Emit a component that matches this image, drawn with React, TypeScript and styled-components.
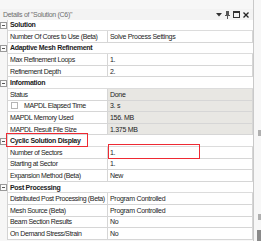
import React, { ReactElement } from "react";
import styled, { createGlobalStyle } from "styled-components";

type Row =
  | { kind: "group"; title: string; highlight?: boolean }
  | {
      kind: "prop";
      label: string;
      value: string;
      readOnly?: boolean;
      checkbox?: boolean;
      highlight?: boolean;
    };

const ROWS: Row[] = [
  { kind: "group", title: "Solution" },
  { kind: "prop", label: "Number Of Cores to Use (Beta)", value: "Solve Process Settings" },
  { kind: "group", title: "Adaptive Mesh Refinement" },
  { kind: "prop", label: "Max Refinement Loops", value: "1." },
  { kind: "prop", label: "Refinement Depth", value: "2." },
  { kind: "group", title: "Information" },
  { kind: "prop", label: "Status", value: "Done", readOnly: true },
  { kind: "prop", label: "MAPDL Elapsed Time", value: "3. s", readOnly: true, checkbox: true },
  { kind: "prop", label: "MAPDL Memory Used", value: "156. MB", readOnly: true },
  { kind: "prop", label: "MAPDL Result File Size", value: "1.375 MB", readOnly: true },
  { kind: "group", title: "Cyclic Solution Display", highlight: true },
  { kind: "prop", label: "Number of Sectors", value: "1.", highlight: true },
  { kind: "prop", label: "Starting at Sector", value: "1." },
  { kind: "prop", label: "Expansion Method (Beta)", value: "New" },
  { kind: "group", title: "Post Processing" },
  { kind: "prop", label: "Distributed Post Processing (Beta)", value: "Program Controlled" },
  { kind: "prop", label: "Mesh Source (Beta)", value: "Program Controlled" },
  { kind: "prop", label: "Beam Section Results", value: "No" },
  { kind: "prop", label: "On Demand Stress/Strain", value: "No" },
];

function App(): ReactElement {
  return (
    <>
      <GlobalStyle />
      <Page>
        <Panel>
          <TitleBar>
            <Title>Details of "Solution (C6)"</Title>
            <Grip />
            <TitleIcons>
              <svg width="6" height="4" viewBox="0 0 6 4">
                <path d="M0 0h6L3 3.5z" fill="#333" />
              </svg>
              <svg width="5" height="8" viewBox="0 0 5 8">
                <path d="M1 0h3v4h1v1H3v3H2V5H0V4h1z" fill="#555" />
              </svg>
              <svg width="7" height="7" viewBox="0 0 7 7">
                <rect x="0.5" y="0.5" width="6" height="6" fill="none" stroke="#333" />
                <path d="M0.5 1.5h6" stroke="#333" />
              </svg>
              <svg width="6" height="6" viewBox="0 0 6 6">
                <path d="M0.5 0.5l5 5M5.5 0.5l-5 5" stroke="#222" strokeWidth="1.3" />
              </svg>
            </TitleIcons>
          </TitleBar>
          <Grid>
            {ROWS.map((row, index) =>
              row.kind === "group" ? (
                <Row key={index}>
                  <Gutter>
                    <Toggle />
                  </Gutter>
                  <GroupCell>
                    {row.title}
                    {row.highlight && <GroupMark />}
                  </GroupCell>
                </Row>
              ) : (
                <Row key={index}>
                  <Gutter />
                  <LabelCell>
                    {row.checkbox && <Check />}
                    {row.label}
                  </LabelCell>
                  <ValueCell $readOnly={row.readOnly}>
                    {row.value}
                    {row.highlight && <ValueMark />}
                  </ValueCell>
                </Row>
              )
            )}
          </Grid>
        </Panel>
        <Side>
          <SideTab $top={130} />
          <SideTab $top={78} />
          <SideThumb />
        </Side>
      </Page>
    </>
  );
}

const GlobalStyle = createGlobalStyle`
  html, body {
    margin: 0;
    padding: 0;
    background: #f7f7f7;
  }
  body {
    font-family: "Liberation Sans", Arial, sans-serif;
    font-size: 7px;
    letter-spacing: -0.3px;
    color: #1c1c1c;
  }
`;

const Page = styled.div`
  display: flex;
  width: 261px;
  height: 241px;
  overflow: hidden;
`;

const Panel = styled.div`
  width: 254px;
  flex-shrink: 0;
  padding-top: 9px;
  display: flex;
  flex-direction: column;
  border-right: 1px solid #c9c9c9;
  box-sizing: border-box;
`;

const TitleBar = styled.div`
  display: flex;
  align-items: center;
  height: 10.5px;
  flex-shrink: 0;
  padding: 1px 4px 0 3px;
  box-sizing: border-box;
  background: #f3f3f3;
`;

const Title = styled.span`
  color: #6e6e6e;
  white-space: nowrap;
`;

const Grip = styled.div`
  flex: 1;
  height: 3px;
  margin: 0 5px 0 4px;
  background-image: radial-gradient(circle, #cfcfcf 0.6px, transparent 0.7px);
  background-size: 2px 2px;
`;

const TitleIcons = styled.div`
  display: flex;
  align-items: center;
  gap: 3px;
`;

const Grid = styled.div`
  display: flex;
  flex-direction: column;
  flex-shrink: 0;
  background: #ffffff;
`;

const Row = styled.div`
  display: grid;
  grid-template-columns: 8px 100px 1fr;
  height: 11.6px;
  flex-shrink: 0;
  box-sizing: border-box;
`;

const Gutter = styled.div`
  display: flex;
  align-items: center;
  justify-content: center;
  background: #f6f6f6;
  border-right: 1px solid #d3d3d3;
`;

const Toggle = styled.div`
  position: relative;
  width: 5px;
  height: 5px;
  border: 1px solid #9a9a9a;
  background: #fbfbfb;
  &::after {
    content: "";
    position: absolute;
    left: 1px;
    right: 1px;
    top: 2px;
    height: 1px;
    background: #555;
  }
`;

const GroupCell = styled.div`
  position: relative;
  grid-column: 2 / 4;
  display: flex;
  align-items: center;
  padding-left: 2px;
  font-weight: 700;
  white-space: nowrap;
  border-bottom: 1px solid #dcdcdc;
  background: #ffffff;
`;

const Mark = styled.span`
  position: absolute;
  left: 0;
  border: 1.5px solid #ee2a33;
  box-sizing: border-box;
  pointer-events: none;
`;

const GroupMark = styled(Mark)`
  left: -2px;
  top: -2px;
  width: 82px;
  height: 14px;
`;

const ValueMark = styled(Mark)`
  top: -3px;
  width: 92px;
  height: 15px;
`;

const Cell = styled.div`
  display: flex;
  align-items: center;
  padding-left: 2px;
  border-bottom: 1px solid #d6d6d6;
  border-right: 1px solid #d6d6d6;
  white-space: nowrap;
  overflow: hidden;
`;

const LabelCell = styled(Cell)`
  background: #ffffff;
  letter-spacing: -0.36px;
`;

const ValueCell = styled(Cell)<{ $readOnly?: boolean }>`
  position: relative;
  overflow: visible;
  background: ${({ $readOnly }) => ($readOnly ? "#e8e7e3" : "#ffffff")};
`;

const Check = styled.span`
  width: 5px;
  height: 5px;
  border: 1px solid #b5b5b5;
  background: #fff;
  margin: 0 6px 0 1px;
`;

const Side = styled.div`
  flex: 1;
  display: flex;
  flex-direction: column;
  align-items: flex-end;
  background: #f7f7f7;
`;

const SideTab = styled.div<{ $top: number }>`
  margin-top: ${({ $top }) => $top}px;
  width: 3px;
  height: 6px;
  background: #b0b0b0;
`;

const SideThumb = styled.div`
  margin-top: auto;
  width: 4px;
  height: 11px;
  background: #8a8a8a;
`;

export default App;
